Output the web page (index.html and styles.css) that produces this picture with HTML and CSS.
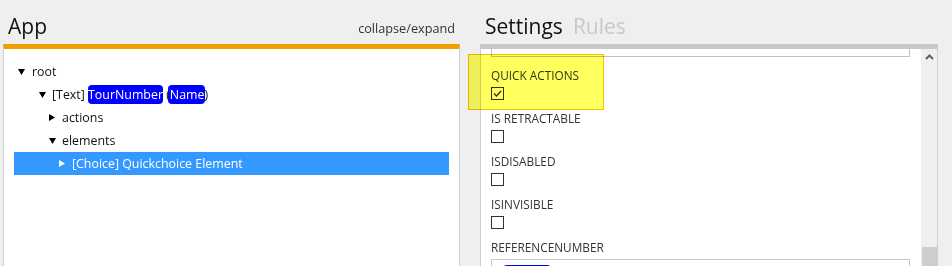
FILE: index.html
```html
<!DOCTYPE html>
<html>
<head>
<meta charset="utf-8">
<link rel="stylesheet" href="styles.css">
</head>
<body>
<div class="app">
  <section class="pane">
    <header class="pane-head">
      <h1 class="title">App</h1>
      <span class="toggle">collapse/expand</span>
    </header>
    <div class="tree">
      <div class="row lvl0"><span class="tri"><svg width="7" height="6" viewBox="0 0 7 6"><polygon points="0,0 7,0 3.5,6" fill="#000"/></svg></span><span class="label">root</span></div>
      <div class="row lvl1"><span class="tri"><svg width="7" height="6" viewBox="0 0 7 6"><polygon points="0,0 7,0 3.5,6" fill="#000"/></svg></span><span class="label">[Text] <span class="hl">TourNumber</span> (<span class="hl hl2">Name</span>)</span></div>
      <div class="row lvl2"><span class="tri"><svg width="6" height="7" viewBox="0 0 6 7"><polygon points="0,0 6,3.5 0,7" fill="#000"/></svg></span><span class="label">actions</span></div>
      <div class="row lvl2"><span class="tri"><svg width="7" height="6" viewBox="0 0 7 6"><polygon points="0,0 7,0 3.5,6" fill="#000"/></svg></span><span class="label">elements</span></div>
      <div class="row lvl3 selected"><span class="tri"><svg width="6" height="7" viewBox="0 0 6 7"><polygon points="0,0 6,3.5 0,7" fill="#fff"/></svg></span><span class="label">[Choice] Quickchoice Element</span></div>
    </div>
  </section>
  <section class="pane right">
    <header class="pane-head tabs">
      <h1 class="title">Settings</h1>
      <h1 class="title inactive">Rules</h1>
    </header>
    <div class="settings">
      <div class="content">
        <div class="prev-input"></div>
        <div class="field">
          <div class="flabel">QUICK ACTIONS</div>
          <div class="cb checked"><svg width="11" height="11" viewBox="0 0 11 11"><path d="M2 5.5 L4.5 8 L9 3" fill="none" stroke="#333" stroke-width="1.3"/></svg></div>
        </div>
        <div class="field">
          <div class="flabel">IS RETRACTABLE</div>
          <div class="cb"></div>
        </div>
        <div class="field">
          <div class="flabel">ISDISABLED</div>
          <div class="cb"></div>
        </div>
        <div class="field">
          <div class="flabel">ISINVISIBLE</div>
          <div class="cb"></div>
        </div>
        <div class="field">
          <div class="flabel">REFERENCENUMBER</div>
          <div class="textbox"><span class="chip"></span></div>
        </div>
      </div>
      <div class="scrollbar">
        <svg class="arrow" width="9" height="6" viewBox="0 0 9 6"><path d="M1 5 L4.5 1.5 L8 5" fill="none" stroke="#606060" stroke-width="2"/></svg>
        <div class="thumb"></div>
      </div>
    </div>
    <div class="callout"></div>
  </section>
</div>
</body>
</html>
```
FILE: styles.css
```css
html, body {
  margin: 0;
  padding: 0;
}
body {
  background: #efefef;
  font-family: "Open Sans", "Noto Sans", sans-serif;
  color: #000;
  width: 952px;
  height: 266px;
  overflow: hidden;
}
.app {
  display: grid;
  grid-template-columns: 457px 458px;
  column-gap: 20px;
  padding-left: 3px;
  height: 266px;
}
.pane {
  display: flex;
  flex-direction: column;
  min-height: 0;
}
.pane.right {
  position: relative;
}
.pane-head {
  height: 44px;
  display: flex;
  justify-content: space-between;
  align-items: flex-end;
  padding: 0 5px 0 5px;
  box-sizing: border-box;
}
.title {
  margin: 0;
  font-size: 21px;
  font-weight: 400;
  line-height: 28px;
  padding-bottom: 4px;
  color: #111;
}
.toggle {
  font-size: 12.7px;
  color: #333;
  line-height: 18px;
  padding-bottom: 7px;
}
.tabs {
  justify-content: flex-start;
  gap: 10px;
}
.title.inactive {
  color: #c8c8c8;
}
.tree {
  flex: 1;
  background: #fff;
  border-top: 5px solid #f29d00;
  border-left: 1px solid #d0d0d0;
  border-right: 1px solid #d0d0d0;
  padding-top: 11px;
}
.row {
  height: 23px;
  line-height: 23px;
  font-size: 12.4px;
  display: flex;
  align-items: center;
  margin: 0 10px;
  color: #111;
}
.row .tri {
  display: flex;
  align-items: center;
  width: 13px;
  height: 23px;
}
.lvl0 { padding-left: 4px; }
.lvl0 .tri { width: 14px; }
.lvl1 { padding-left: 25px; }
.lvl2 { padding-left: 35px; }
.lvl3 { padding-left: 45px; }
.selected {
  background: #3399ff;
  color: #fff;
}
.hl {
  background: #0000ff;
  color: #fff;
  border-radius: 4px;
  padding: 1px 0;
}
.hl2 {
  margin-left: -2px;
  padding-left: 2px;
}
.settings {
  flex: 1;
  display: flex;
  background: #fff;
  border-top: 5px solid #c8c8c8;
  border-left: 1px solid #cfcfcf;
  border-right: 1px solid #cfcfcf;
  min-height: 0;
  overflow: hidden;
}
.content {
  flex: 1;
  padding-left: 10px;
  padding-right: 11px;
}
.prev-input {
  height: 7px;
  border: 1px solid #c0c0c0;
  border-top: none;
  margin-bottom: 10px;
}
.field {
  height: 43px;
}
.flabel {
  font-size: 11.8px;
  line-height: 16px;
  color: #333;
}
.cb {
  width: 11px;
  height: 11px;
  border: 1px solid #333;
  margin-top: 4px;
  display: flex;
}
.textbox {
  margin-top: 4px;
  height: 26px;
  border: 1px solid #c8c8c8;
  padding: 5px 0 0 11px;
  box-sizing: border-box;
}
.chip {
  display: block;
  width: 48px;
  height: 12px;
  background: #0000ff;
  border-radius: 4px;
}
.scrollbar {
  width: 16px;
  background: #f0f0f0;
  display: flex;
  flex-direction: column;
  align-items: center;
  justify-content: space-between;
}
.arrow {
  margin-top: 5px;
}
.thumb {
  width: 15px;
  height: 19px;
  background: #cdcdcd;
}
.callout {
  position: absolute;
  left: -12px;
  top: 54px;
  width: 134px;
  height: 54px;
  background: #ffff5e;
  mix-blend-mode: multiply;
  border: 1px solid #f2c200;
}
```
